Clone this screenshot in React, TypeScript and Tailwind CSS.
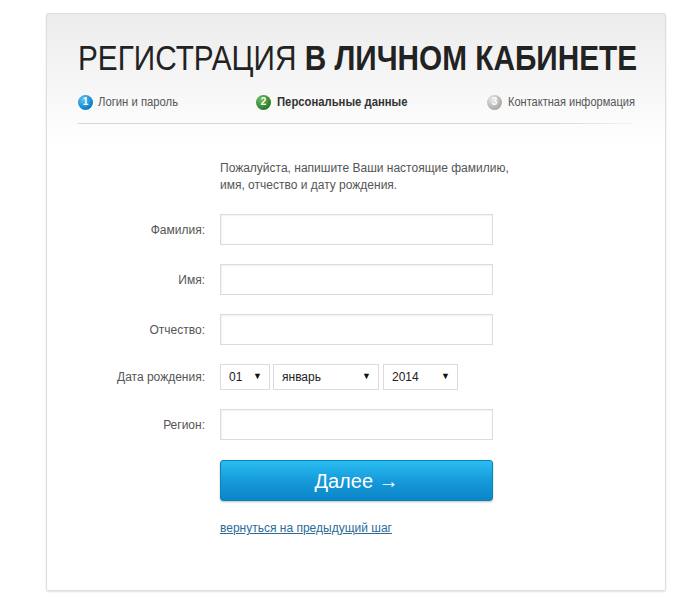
import React from 'react';

function StepBadge({ n, tone }: { n: number; tone: 'blue' | 'green' | 'gray' }) {
  const bg =
    tone === 'blue'
      ? 'bg-[radial-gradient(circle_at_35%_30%,#5cc3f5,#0a7fc4_70%)]'
      : tone === 'green'
      ? 'bg-[radial-gradient(circle_at_35%_30%,#6fbf5e,#2c7a2a_70%)]'
      : 'bg-[radial-gradient(circle_at_35%_30%,#e8e8e8,#a9a9a9_70%)]';
  return (
    <span
      className={`flex h-[15px] w-[15px] shrink-0 items-center justify-center rounded-full text-[10px] font-bold leading-none text-white ${bg}`}
    >
      {n}
    </span>
  );
}

function Field({ label, children }: { label: string; children: React.ReactNode }) {
  return (
    <div className="flex items-center">
      <label className="w-[127px] text-right text-[12px] text-[#555]">{label}</label>
      <div className="ml-[15px]">{children}</div>
    </div>
  );
}

function TextInput() {
  return (
    <input
      type="text"
      className="block h-[31px] w-[273px] border border-[#dcdcdc] bg-white px-2 text-[13px] shadow-[inset_1px_1px_2px_rgba(0,0,0,0.06)] outline-none"
    />
  );
}

function FakeSelect({ value, width }: { value: string; width: string }) {
  return (
    <div
      className={`flex h-[26px] items-center justify-between border border-[#dcdcdc] bg-white pl-[8px] pr-[7px] text-[12px] text-[#222] ${width}`}
    >
      <span>{value}</span>
      <span className="text-[9px] text-[#111]">▼</span>
    </div>
  );
}

export default function App() {
  return (
    <div className="min-h-[612px] bg-white pl-[46px] pt-[13px]" style={{ fontFamily: '"Liberation Sans", Arial, sans-serif' }}>
      <div className="h-[578px] w-[620px] rounded-[2px] border border-[#dedede] bg-[linear-gradient(to_bottom,#ececec_0px,#ffffff_130px)] shadow-[0_1px_2px_rgba(0,0,0,0.12)]">
        <div className="px-[31px] pt-[24px]">
          {/* Title */}
          <h1 className="h-[40px] whitespace-nowrap text-[35px] leading-[40px] text-[#222]">
            <span className="inline-block w-[558px] origin-left scale-x-[0.85]">
              РЕГИСТРАЦИЯ <span className="font-bold">В ЛИЧНОМ КАБИНЕТЕ</span>
            </span>
          </h1>

          {/* Steps */}
          <div className="mt-[15px] flex items-center whitespace-nowrap pb-[12px] text-[12px]">
            <div className="flex w-[178px] shrink-0 items-center gap-[5px]">
              <StepBadge n={1} tone="blue" />
              <span className="inline-block origin-left scale-x-[0.94] text-[#555]">Логин и пароль</span>
            </div>
            <div className="flex w-[231px] shrink-0 items-center gap-[6px]">
              <StepBadge n={2} tone="green" />
              <span className="inline-block origin-left scale-x-[0.94] font-bold text-[#333]">Персональные данные</span>
            </div>
            <div className="flex w-[149px] shrink-0 items-center gap-[6px]">
              <StepBadge n={3} tone="gray" />
              <span className="inline-block w-[128px] origin-left scale-x-[0.92] text-[#555]">Контактная информация</span>
            </div>
          </div>
          <div className="h-px w-full bg-[linear-gradient(to_right,#d6d6d6_85%,rgba(214,214,214,0.2))]" />

          {/* Form */}
          <div className="pl-[142px] pt-[36px] text-[12px] leading-[17px] text-[#555]">
            Пожалуйста, напишите Ваши настоящие фамилию,
            <br />
            имя, отчество и дату рождения.
          </div>

          <div className="mt-[20px] flex flex-col gap-[19px]">
            <Field label="Фамилия:">
              <TextInput />
            </Field>
            <Field label="Имя:">
              <TextInput />
            </Field>
            <Field label="Отчество:">
              <TextInput />
            </Field>
            <Field label="Дата рождения:">
              <div className="flex gap-[3px]">
                <FakeSelect value="01" width="w-[50px]" />
                <FakeSelect value="январь" width="w-[106px]" />
                <div className="ml-[1px]">
                  <FakeSelect value="2014" width="w-[75px]" />
                </div>
              </div>
            </Field>
            <Field label="Регион:">
              <TextInput />
            </Field>
          </div>

          <div className="ml-[142px] mt-[20px]">
            <button
              type="button"
              className="flex h-[41px] w-[273px] items-center justify-center rounded-[3px] border border-[#0d80bb] bg-[linear-gradient(to_bottom,#29bdf2,#1597d8_55%,#0b86c7)] text-[20px] text-white shadow-[0_1px_2px_rgba(0,0,0,0.25)]"
            >
              Далее →
            </button>
            <a href="#" className="mt-[18px] block text-[12px] text-[#2b6b9a] underline">
              вернуться на предыдущий шаг
            </a>
          </div>
        </div>
      </div>
    </div>
  );
}
